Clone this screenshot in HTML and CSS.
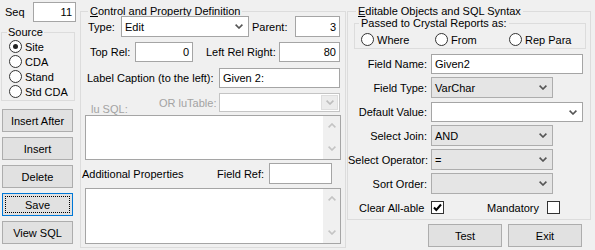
FILE: index.html
```html
<!DOCTYPE html>
<html>
<head>
<meta charset="utf-8">
<link rel="stylesheet" href="styles.css">
</head>
<body>
<div class="app">
  <div class="left">
    <div class="seq-row"><span class="seq-label">Seq</span><div class="edit num seq">11</div></div>
    <fieldset class="group source">
      <legend>Source</legend>
      <div class="radio-row"><span class="radio checked"></span><span class="rlabel">Site</span></div>
      <div class="radio-row"><span class="radio"></span><span class="rlabel">CDA</span></div>
      <div class="radio-row"><span class="radio"></span><span class="rlabel">Stand</span></div>
      <div class="radio-row"><span class="radio"></span><span class="rlabel">Std CDA</span></div>
    </fieldset>
    <div class="btn-stack">
      <div class="btn">Insert After</div>
      <div class="btn">Insert</div>
      <div class="btn">Delete</div>
      <div class="btn focus">Save</div>
      <div class="btn">View SQL</div>
    </div>
  </div>

  <fieldset class="group middle">
    <legend><u>C</u>ontrol and Property Definition</legend>
    <div class="row r1">
      <span class="lbl l-type">Type:</span>
      <div class="combo white w-type"><span>Edit</span><svg class="chev" width="8" height="5" viewBox="0 0 8 5"><path d="M0.6 0.6 L4 4 L7.4 0.6" fill="none" stroke="#555" stroke-width="1.6"/></svg></div>
      <span class="lbl l-parent">Parent:</span>
      <div class="edit num w-parent">3</div>
    </div>
    <div class="row r2">
      <span class="lbl l-toprel">Top Rel:</span>
      <div class="edit num w-toprel">0</div>
      <span class="lbl l-leftrel">Left Rel Right:</span>
      <div class="edit num w-leftrel">80</div>
    </div>
    <div class="row r3">
      <span class="lbl l-caption">Label Caption (to the left):</span>
      <div class="edit w-caption">Given 2:</div>
    </div>
    <div class="row r4">
      <span class="lbl dis l-lusql">lu SQL:</span>
      <span class="lbl dis l-lutable">OR luTable:</span>
      <div class="combo disabled w-lutable"><span class="dd-btn"><svg width="8" height="5" viewBox="0 0 8 5"><path d="M0.6 0.6 L4 4 L7.4 0.6" fill="none" stroke="#bdbdbd" stroke-width="1.6"/></svg></span></div>
    </div>
    <div class="memo memo1">
      <div class="sbar">
        <svg width="8" height="5" viewBox="0 0 8 5"><path d="M0.6 4.4 L4 1 L7.4 4.4" fill="none" stroke="#c4c4c4" stroke-width="1.6"/></svg>
        <svg width="8" height="5" viewBox="0 0 8 5"><path d="M0.6 0.6 L4 4 L7.4 0.6" fill="none" stroke="#c4c4c4" stroke-width="1.6"/></svg>
      </div>
    </div>
    <div class="row r5">
      <span class="lbl l-addprops">Additional Properties</span>
      <span class="lbl l-fieldref">Field Ref:</span>
      <div class="edit w-fieldref"></div>
    </div>
    <div class="memo memo2">
      <div class="sbar">
        <svg width="8" height="5" viewBox="0 0 8 5"><path d="M0.6 4.4 L4 1 L7.4 4.4" fill="none" stroke="#c4c4c4" stroke-width="1.6"/></svg>
        <svg width="8" height="5" viewBox="0 0 8 5"><path d="M0.6 0.6 L4 4 L7.4 0.6" fill="none" stroke="#c4c4c4" stroke-width="1.6"/></svg>
      </div>
    </div>
  </fieldset>

  <div class="right-col">
    <fieldset class="group right">
      <legend><u>E</u>ditable Objects and SQL Syntax</legend>
      <fieldset class="group passed">
        <legend>Passed to Crystal Reports as:</legend>
        <div class="passed-row">
          <div class="pitem p-where"><span class="radio"></span><span class="rlabel">Where</span></div>
          <div class="pitem p-from"><span class="radio"></span><span class="rlabel">From</span></div>
          <div class="pitem"><span class="radio"></span><span class="rlabel">Rep Para</span></div>
        </div>
      </fieldset>
      <div class="frow f-name"><span class="flbl">Field Name:</span><div class="edit wide">Given2</div></div>
      <div class="frow f-type"><span class="flbl">Field Type:</span><div class="combo grey narrow"><span>VarChar</span><svg class="chev" width="8" height="5" viewBox="0 0 8 5"><path d="M0.6 0.6 L4 4 L7.4 0.6" fill="none" stroke="#555" stroke-width="1.6"/></svg></div></div>
      <div class="frow f-default"><span class="flbl">Default Value:</span><div class="combo white wide"><span></span><svg class="chev" width="8" height="5" viewBox="0 0 8 5"><path d="M0.6 0.6 L4 4 L7.4 0.6" fill="none" stroke="#555" stroke-width="1.6"/></svg></div></div>
      <div class="frow f-join"><span class="flbl">Select Join:</span><div class="combo grey narrow"><span>AND</span><svg class="chev" width="8" height="5" viewBox="0 0 8 5"><path d="M0.6 0.6 L4 4 L7.4 0.6" fill="none" stroke="#555" stroke-width="1.6"/></svg></div></div>
      <div class="frow f-op"><span class="flbl">Select Operator:</span><div class="combo grey narrow"><span>=</span><svg class="chev" width="8" height="5" viewBox="0 0 8 5"><path d="M0.6 0.6 L4 4 L7.4 0.6" fill="none" stroke="#555" stroke-width="1.6"/></svg></div></div>
      <div class="frow f-sort"><span class="flbl">Sort Order:</span><div class="combo grey narrow"><span></span><svg class="chev" width="8" height="5" viewBox="0 0 8 5"><path d="M0.6 0.6 L4 4 L7.4 0.6" fill="none" stroke="#555" stroke-width="1.6"/></svg></div></div>
      <div class="crow">
        <span class="c-clear">Clear All-able</span>
        <span class="check"><svg width="11" height="11" viewBox="0 0 11 11"><path d="M2 5.5 L4.3 8 L9 2.5" fill="none" stroke="#000" stroke-width="2"/></svg></span>
        <span class="c-mand">Mandatory</span>
        <span class="check"></span>
      </div>
    </fieldset>
    <div class="btn-row">
      <div class="btn bw">Test</div>
      <div class="btn bw">Exit</div>
    </div>
  </div>
</div>
</body>
</html>
```

FILE: styles.css
```css
html, body {
  margin: 0;
  padding: 0;
}
body {
  background: #f0f0f0;
  font-family: "Liberation Sans", Arial, sans-serif;
  font-size: 11px;
  color: #000;
  width: 595px;
  height: 250px;
  overflow: hidden;
}
.app {
  display: flex;
  align-items: flex-start;
}

/* generic controls */
.edit {
  box-sizing: border-box;
  background: #fff;
  border: 1px solid #a5a5a5;
  height: 20px;
  display: flex;
  align-items: center;
  padding: 0 3px;
  white-space: nowrap;
}
.num {
  justify-content: flex-end;
}
.combo {
  box-sizing: border-box;
  border: 1px solid #a5a5a5;
  height: 21px;
  display: flex;
  align-items: center;
  padding: 0 5px 0 3px;
  white-space: nowrap;
}
.combo.white { background: #fff; }
.combo.grey { background: #e5e5e5; border-color: #adadad; }
.combo .chev { margin-left: auto; }
.combo.disabled {
  background: #fff;
  border-color: #c4c4c4;
  padding: 1px;
  justify-content: flex-end;
}
.dd-btn {
  box-sizing: border-box;
  width: 17px;
  height: 100%;
  background: #ececec;
  border: 1px solid #dedede;
  display: flex;
  align-items: center;
  justify-content: center;
}
.btn {
  box-sizing: border-box;
  background: #e1e1e1;
  border: 1px solid #adadad;
  height: 23px;
  display: flex;
  align-items: center;
  justify-content: center;
  white-space: nowrap;
}
.btn.focus {
  border-color: #0078d7;
  outline: 1px dotted #000;
  outline-offset: -4px;
}
.radio {
  box-sizing: border-box;
  width: 13px;
  height: 13px;
  border: 1px solid #333;
  border-radius: 50%;
  background: #fff;
  display: flex;
  align-items: center;
  justify-content: center;
  flex: none;
}
.radio.checked::after {
  content: "";
  width: 5px;
  height: 5px;
  border-radius: 50%;
  background: #222;
}
.rlabel {
  margin-left: 3px;
}
.check {
  box-sizing: border-box;
  width: 13px;
  height: 13px;
  border: 1px solid #333;
  background: #fff;
  display: flex;
  align-items: center;
  justify-content: center;
  flex: none;
}
fieldset.group {
  margin: 0;
  padding: 0;
  border: 1px solid #dcdcdc;
  min-width: 0;
  box-sizing: border-box;
}
fieldset.group legend {
  padding: 0 2px;
  line-height: 12px;
}

/* left column */
.left {
  width: 80px;
  flex: none;
  padding-top: 2px;
  box-sizing: border-box;
}
.seq-row {
  display: flex;
  align-items: center;
  height: 20px;
}
.seq-label {
  width: 33px;
  padding-left: 5px;
  box-sizing: border-box;
}
.seq { width: 43px; }
.source {
  margin: 4px 0 0 1px !important;
  width: 74px;
  height: 75px;
  padding: 1px 0 0 7px !important;
}
.source legend {
  margin-left: -2px;
  padding: 0 1px !important;
}
.radio-row {
  display: flex;
  align-items: center;
  height: 15px;
}
.btn-stack {
  margin-top: 8px;
  display: flex;
  flex-direction: column;
  gap: 5px;
  padding-left: 2px;
}
.btn-stack .btn { width: 71px; }

/* middle group */
.middle {
  margin-top: 5px !important;
  width: 266px;
  height: 243px;
  flex: none;
}
.middle legend { margin-left: 7px; }
.row {
  display: flex;
  align-items: center;
  white-space: nowrap;
}
.lbl { flex: none; }
.dis { color: #a3a3a3; }
.r1 { margin-top: -1px; height: 21px; }
.l-type { margin-left: 7px; width: 33px; }
.w-type { width: 128px; }
.l-parent { margin-left: 3px; width: 43px; }
.w-parent { width: 45px; height: 21px; }
.r2 { margin-top: 5px; height: 20px; }
.l-toprel { margin-left: 9px; width: 45px; }
.w-toprel { width: 58px; }
.l-leftrel { margin-left: 13px; width: 73px; }
.w-leftrel { width: 61px; }
.r3 { margin-top: 6px; height: 20px; }
.l-caption { margin-left: 6px; width: 132px; }
.w-caption { width: 121px; }
.r4 { margin-top: 5px; height: 19px; }
.l-lusql { margin-left: 10px; width: 68px; align-self: flex-end; margin-bottom: -3px; }
.l-lutable { width: 60px; }
.w-lutable { width: 121px; height: 19px; }
.memo {
  box-sizing: border-box;
  margin-left: 4px;
  width: 256px;
  background: #fff;
  border: 1px solid #a5a5a5;
  display: flex;
  justify-content: flex-end;
}
.memo1 { margin-top: 3px; height: 45px; }
.memo2 { margin-top: 4px; height: 56px; }
.sbar {
  width: 17px;
  background: #f0f0f0;
  display: flex;
  flex-direction: column;
  align-items: center;
  justify-content: space-between;
  padding: 7px 0 8px;
  box-sizing: border-box;
}
.r5 { margin-top: 3px; height: 21px; }
.l-addprops { margin-left: 1px; width: 135px; }
.l-fieldref { width: 52px; }
.w-fieldref { width: 63px; height: 21px; }

/* right group */
.right-col {
  margin-left: 1px;
  width: 244px;
  flex: none;
}
.right {
  margin-top: 5px !important;
  width: 244px;
  height: 215px;
}
.right > legend { margin-left: 8px; }
.passed {
  margin-left: 6px !important;
  width: 232px;
  height: 32px;
}
.passed legend { margin-left: 4px; }
.passed-row {
  display: flex;
  align-items: center;
  height: 13px;
  margin-top: 4px;
  padding-left: 6px;
}
.pitem {
  display: flex;
  align-items: center;
}
.p-where, .p-from { width: 74px; }
.frow {
  display: flex;
  align-items: center;
}
.flbl {
  width: 79px;
  text-align: right;
  margin-right: 4px;
  white-space: nowrap;
  flex: none;
}
.wide { width: 152px; }
.narrow { width: 122px; }
.f-name { margin-top: 5px; }
.f-name .edit { height: 20px; }
.f-type { margin-top: 3px; }
.f-default { margin-top: 4px; }
.f-default .combo { height: 20px; }
.f-join, .f-op, .f-sort { margin-top: 3px; }
.crow {
  margin-top: 7px;
  display: flex;
  align-items: center;
  height: 13px;
}
.c-clear { margin-left: 11px; width: 72px; }
.c-mand { margin-left: 43px; width: 60px; }
.btn-row {
  margin-top: 4px;
  margin-left: 81px;
  display: flex;
  gap: 6px;
}
.bw { width: 74px; }
```
